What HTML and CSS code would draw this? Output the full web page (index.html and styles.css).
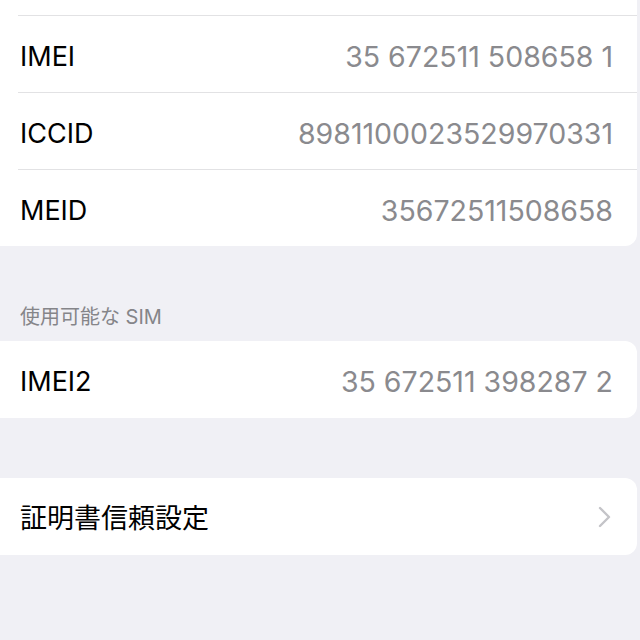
FILE: index.html
```html
<!DOCTYPE html>
<html lang="ja">
<head>
    <meta charset="UTF-8">
    <meta name="viewport" content="width=device-width, initial-scale=1.0">
    <title>情報</title>
    <link rel="stylesheet" href="styles.css">
</head>
<body>
    <div class="card card-top">
        <div class="stub"></div>
        <div class="row">
            <span class="label">IMEI</span>
            <span class="value">35 672511 508658 1</span>
        </div>
        <div class="row">
            <span class="label">ICCID</span>
            <span class="value">8981100023529970331</span>
        </div>
        <div class="row">
            <span class="label">MEID</span>
            <span class="value">35672511508658</span>
        </div>
    </div>

    <div class="section-header">使用可能な SIM</div>
    <div class="card">
        <div class="row">
            <span class="label">IMEI2</span>
            <span class="value">35 672511 398287 2</span>
        </div>
    </div>

    <div class="spacer"></div>
    <div class="card">
        <div class="row row-link">
            <span class="label">証明書信頼設定</span>
            <svg class="chevron" width="14" height="22" viewBox="0 0 14 22">
                <path d="M2 2 L11 11 L2 20" fill="none" stroke="#c4c4c8" stroke-width="2.4" stroke-linecap="round" stroke-linejoin="round"/>
            </svg>
        </div>
    </div>
</body>
</html>
```

FILE: styles.css
```css
* {
    margin: 0;
    padding: 0;
    box-sizing: border-box;
}

body {
    font-family: Inter, "Noto Sans CJK JP", sans-serif;
    background-color: #f0f0f5;
    width: 640px;
    height: 640px;
    overflow: hidden;
}

.card {
    background-color: #fff;
    margin-right: 3px;
    border-radius: 0 12px 12px 0;
}

.card-top {
    border-radius: 0 0 12px 0;
}

.stub {
    height: 15px;
}

.row {
    display: flex;
    align-items: center;
    justify-content: space-between;
    height: 77px;
    margin-left: 18px;
    padding: 4px 24px 0 2px;
}

.row-link {
    padding-top: 0;
}

.card-top .row {
    border-top: 1px solid #e2e2e4;
}

.label {
    font-size: 27px;
    color: #000;
}

.value {
    font-size: 28.5px;
    color: #8a8a8e;
}

.chevron {
    margin-right: 1px;
}

.section-header {
    height: 95px;
    display: flex;
    align-items: flex-end;
    padding: 0 0 12px 20px;
    font-size: 20px;
    line-height: 24px;
    color: #858589;
}

.spacer {
    height: 60px;
}
```
